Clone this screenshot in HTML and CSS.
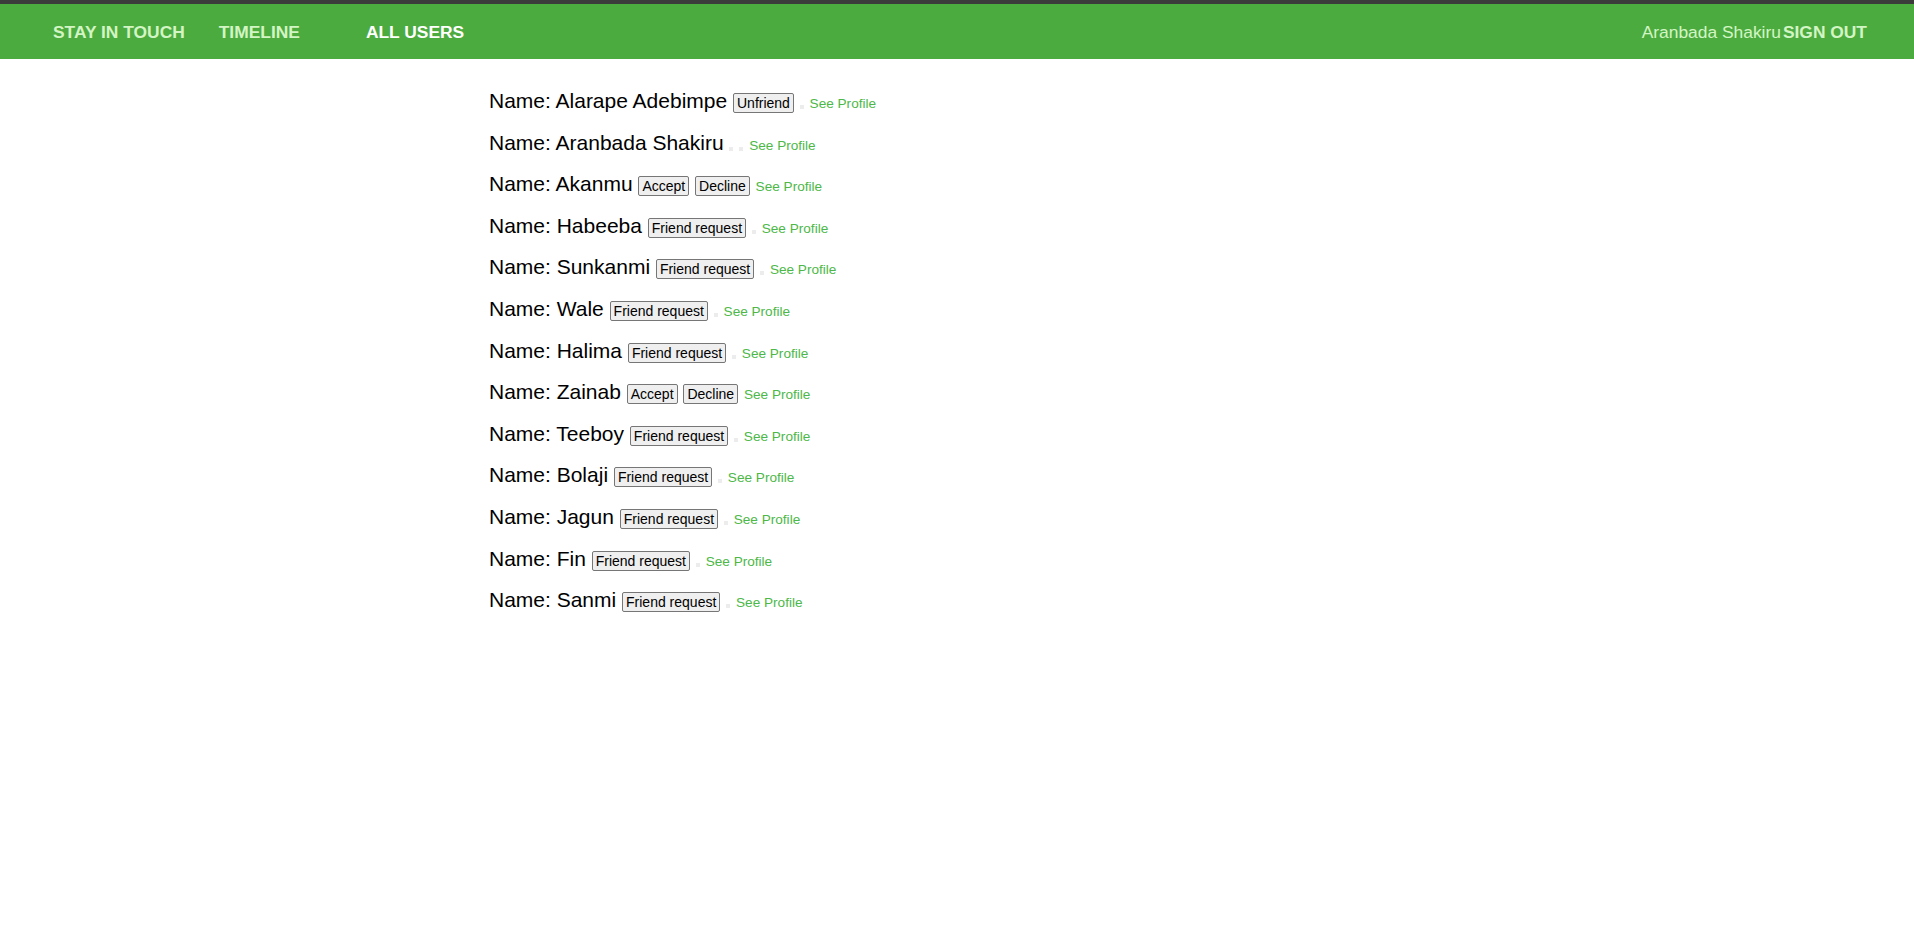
FILE: index.html
```html
<!DOCTYPE html>
<html>
<head>
<meta charset="utf-8">
<link rel="stylesheet" href="styles.css">
</head>
<body>
<div class="topline"></div>
<nav class="nav">
  <div class="nav-left">
    <a class="nav-link brand" href="#">STAY IN TOUCH</a>
    <a class="nav-link timeline" href="#">TIMELINE</a>
    <a class="nav-link active" href="#">ALL USERS</a>
  </div>
  <div class="nav-right">
    <span class="user">Aranbada Shakiru</span><a class="nav-link signout" href="#">SIGN OUT</a>
  </div>
</nav>
<main class="list">
  <div class="row">Name: Alarape Adebimpe <button class="btn">Unfriend</button> <span class="dot"></span> <a class="profile" href="#">See Profile</a></div>
  <div class="row">Name: Aranbada Shakiru <span class="dot"></span> <span class="dot"></span> <a class="profile" href="#">See Profile</a></div>
  <div class="row">Name: Akanmu <button class="btn">Accept</button> <button class="btn">Decline</button> <a class="profile" href="#">See Profile</a></div>
  <div class="row">Name: Habeeba <button class="btn">Friend request</button> <span class="dot"></span> <a class="profile" href="#">See Profile</a></div>
  <div class="row">Name: Sunkanmi <button class="btn">Friend request</button> <span class="dot"></span> <a class="profile" href="#">See Profile</a></div>
  <div class="row">Name: Wale <button class="btn">Friend request</button> <span class="dot"></span> <a class="profile" href="#">See Profile</a></div>
  <div class="row">Name: Halima <button class="btn">Friend request</button> <span class="dot"></span> <a class="profile" href="#">See Profile</a></div>
  <div class="row">Name: Zainab <button class="btn">Accept</button> <button class="btn">Decline</button> <a class="profile" href="#">See Profile</a></div>
  <div class="row">Name: Teeboy <button class="btn">Friend request</button> <span class="dot"></span> <a class="profile" href="#">See Profile</a></div>
  <div class="row">Name: Bolaji <button class="btn">Friend request</button> <span class="dot"></span> <a class="profile" href="#">See Profile</a></div>
  <div class="row">Name: Jagun <button class="btn">Friend request</button> <span class="dot"></span> <a class="profile" href="#">See Profile</a></div>
  <div class="row">Name: Fin <button class="btn">Friend request</button> <span class="dot"></span> <a class="profile" href="#">See Profile</a></div>
  <div class="row">Name: Sanmi <button class="btn">Friend request</button> <span class="dot"></span> <a class="profile" href="#">See Profile</a></div>
</main>
</body>
</html>
```
FILE: styles.css
```css
html, body {
  margin: 0;
  padding: 0;
  background: #fff;
  font-family: "Liberation Sans", Arial, sans-serif;
}

.topline {
  height: 4px;
  background: #3b3b3b;
}

.nav {
  box-sizing: border-box;
  height: 55px;
  background: #4cab3e;
  display: flex;
  align-items: center;
  justify-content: space-between;
  padding: 2px 47px 0 53px;
}

.nav-left,
.nav-right {
  display: flex;
  align-items: center;
}

.nav-link {
  color: #d3f5c5;
  font-weight: bold;
  font-size: 17.4px;
  text-decoration: none;
}

.nav-left .brand {
  margin-right: 34px;
}

.nav-left .timeline {
  margin-right: 66px;
}

.nav-left .active {
  color: #ffffff;
}

.user {
  color: #d3f5c5;
  font-size: 17.4px;
}

.nav-right .signout {
  margin-left: 2px;
}

.list {
  padding: 30px 0 0 489px;
}

.row {
  font-size: 21px;
  line-height: 24px;
  height: 24px;
  margin-bottom: 17.6px;
  color: #000;
  white-space: nowrap;
}

.btn {
  font-family: "Liberation Sans", Arial, sans-serif;
  font-size: 14px;
  line-height: 16px;
  padding: 1px 3px;
  border: 1px solid #767676;
  border-radius: 2px;
  background: #efefef;
  color: #000;
  vertical-align: baseline;
}

.dot {
  display: inline-block;
  width: 4px;
  height: 4px;
  background: #ececec;
  vertical-align: -1px;
}

.profile {
  color: #4db848;
  font-size: 13.6px;
  text-decoration: none;
}
```
